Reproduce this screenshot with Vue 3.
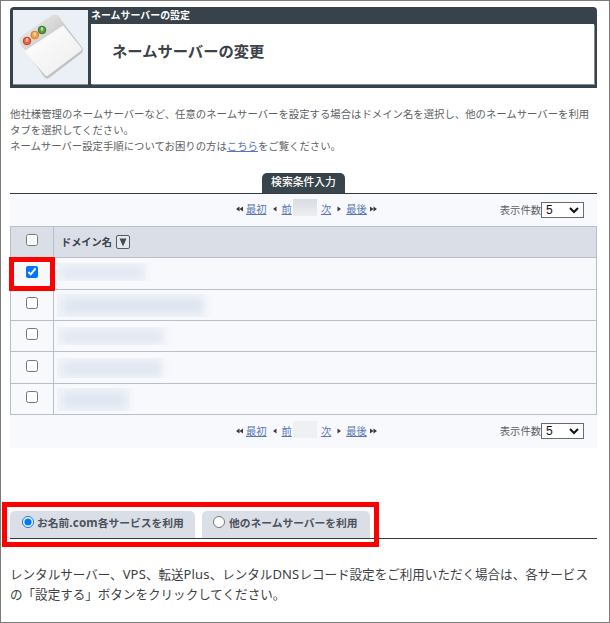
<script setup>
const rows = [
  { checked: true, w: 95, h: 18, top: 5 },
  { checked: false, w: 157, h: 23, top: 4 },
  { checked: false, w: 115, h: 18, top: 6 },
  { checked: false, w: 113, h: 20, top: 6 },
  { checked: false, w: 78, h: 23, top: 4 },
]
</script>

<template>
  <div class="page">
    <header class="head">
      <div class="thumb">
        <svg width="75" height="74" viewBox="0 0 75 74">
          <defs>
            <linearGradient id="side" x1="0" y1="0" x2="1" y2="1">
              <stop offset="0" stop-color="#dcdcdc" /><stop offset="1" stop-color="#b9b9bb" />
            </linearGradient>
            <linearGradient id="bar" x1="0" y1="0" x2="1" y2="1">
              <stop offset="0" stop-color="#f4f4f4" /><stop offset="1" stop-color="#bcbcbc" />
            </linearGradient>
            <linearGradient id="sheet" x1="0" y1="0" x2="1" y2="1">
              <stop offset="0" stop-color="#fff" /><stop offset="1" stop-color="#ededef" />
            </linearGradient>
          </defs>
          <path d="M7 32Q5 28 10 25L39 5.500Q43 3.500 46 7L69.500 38Q71 41 68 43.500L36 68Q33 70 30.500 66Z" fill="url(#side)" />
          <path d="M6 31Q5.500 27 10 25L39 5.500Q43 3.500 46 7L50 14L13 41L9 37Z" fill="url(#bar)" />
          <path d="M11.500 41L50 15.500L68.500 38Q69.500 40 67 41.500L35 65.500Q33 67 31 64Z" fill="url(#sheet)" />
          <g stroke-width="1">
            <circle cx="14" cy="31" r="3.800" fill="#e8643e" stroke="#cd3e24" />
            <circle cx="21.800" cy="25" r="3.800" fill="#f4a344" stroke="#df7922" />
            <circle cx="29" cy="20" r="3.800" fill="#579c3d" stroke="#30752a" />
          </g>
          <g fill="#fff" opacity=".6">
            <ellipse cx="14" cy="30" rx="1.300" ry="2" />
            <ellipse cx="21.800" cy="24" rx="1.300" ry="2" />
            <ellipse cx="29" cy="19" rx="1.300" ry="2" />
          </g>
        </svg>
      </div>
      <div class="headmain">
        <div class="crumb">ネームサーバーの設定</div>
        <h1 class="title">ネームサーバーの変更</h1>
      </div>
    </header>

    <p class="intro">
      他社様管理のネームサーバーなど、任意のネームサーバーを設定する場合はドメイン名を選択し、他のネームサーバーを利用<br />タブを選択してください。<br />ネームサーバー設定手順についてお困りの方は<a>こちら</a>をご覧ください。
    </p>

    <div class="condition"><span>検索条件入力</span></div>

    <section class="panel">
      <template v-for="pos in ['top', 'bottom']" :key="pos">
        <div class="pager" :class="pos">
          <div class="links">
            <svg class="dbl" width="7" height="6" viewBox="0 0 7 6"><path d="M3.5 .5V5.5L0 3ZM7 .5V5.5L3.5 3Z" /></svg>
            <a class="first">最初</a>
            <svg class="prev" width="4" height="6" viewBox="0 0 4 6"><path d="M3.5 .5V5.5L0 3Z" /></svg>
            <a>前</a>
            <span class="mask"></span>
            <a>次</a>
            <svg class="next" width="4" height="6" viewBox="0 0 4 6"><path d="M.5 .5V5.5L4 3Z" /></svg>
            <a class="last">最後</a>
            <svg class="dbl" width="7" height="6" viewBox="0 0 7 6"><path d="M0 .5V5.5L3.5 3ZM3.5 .5V5.5L7 3Z" /></svg>
          </div>
          <div class="count">
            <span class="label">表示件数</span>
            <div class="select">
              <span>5</span>
              <svg width="10" height="7" viewBox="0 0 10 7"><path d="M1 1L5 5L9 1" fill="none" stroke="#111" stroke-width="2" /></svg>
            </div>
          </div>
        </div>

        <div v-if="pos === 'top'" class="table">
          <div class="row th">
            <div class="pick"><input type="checkbox" /></div>
            <div class="name">
              ドメイン名
              <span class="sort"><svg width="8" height="9" viewBox="0 0 8 9"><path d="M0.5 .5H7.5L4 8.5Z" fill="#444b52" /></svg></span>
            </div>
          </div>
          <div v-for="(r, i) in rows" :key="i" class="row">
            <div class="pick">
              <input type="checkbox" :checked="r.checked" />
              <i v-if="r.checked" class="callout"></i>
            </div>
            <div class="cell">
              <span class="blurred" :style="{ width: r.w + 'px', height: r.h + 'px', marginTop: r.top + 'px' }"><i></i></span>
            </div>
          </div>
        </div>
      </template>
    </section>

    <div class="tabs">
      <label class="tab one"><input type="radio" name="ns" checked /><span>お名前<span class="com">.com</span>各サービスを利用</span></label>
      <label class="tab two"><input type="radio" name="ns" /><span>他のネームサーバーを利用</span></label>
      <i class="callout wide"></i>
    </div>

    <p class="note">
      レンタルサーバー、<span>VPS</span>、転送<span>Plus</span>、レンタル<span>DNS</span>レコード設定をご利用いただく場合は、各サービス<br />の「設定する」ボタンをクリックしてください。
    </p>
  </div>
</template>

<style>
body { margin: 0; background: #fff; }
</style>

<style scoped>
* { box-sizing: border-box; }
.page {
  width: 610px; height: 623px; padding: 6px 12px 0 9px; overflow: hidden;
  border: 1px solid #7d7a7a; background: #fff; color: #5c5f64;
  font-family: "Noto Sans CJK JP", sans-serif;
}
.head { display: flex; height: 81px; padding: 3px 3px 4px; background: #37424a; border-radius: 4px 4px 0 0; }
.thumb { width: 75px; height: 74px; background: #ebeff6; flex: none; box-shadow: 0 1px #819098; }
.thumb svg { display: block; }
.headmain { flex: 1; margin-left: 3px; }
.crumb { height: 14px; font-size: 9.95px; line-height: 9px; font-weight: 700; color: #fff; white-space: nowrap; }
.title {
  margin: 0; height: 60px; padding: 0 0 6px 21px; background: #fff; color: #3c4249;
  font-size: 15.3px; font-weight: 700; line-height: 53px; box-shadow: 1px 1px #819098;
}
.intro { margin: 18px 0 0; height: 48px; font-size: 10.39px; line-height: 16px; white-space: nowrap; }
a { color: #5876b4; text-decoration: underline; }
.condition { display: flex; justify-content: center; height: 40px; padding: 19px 0 0; border-bottom: 1px solid #343a42; }
.condition span {
  width: 83px; height: 20px; border-radius: 5px 5px 0 0; color: #fff; text-align: center;
  background: linear-gradient(#37424a, #39464d); font-size: 10.8px; font-weight: 500; line-height: 16px;
}
.panel { height: 254px; background: #f8f9fd; }
.pager { display: flex; justify-content: space-between; height: 32px; padding: 0 13px 0 226px; font-size: 10.3px; }
.links { display: flex; align-items: center; height: 30px; line-height: 16px; }
.links svg { fill: #343b3e; flex: none; }
.first { margin: 0 6px 0 3px; }
.prev { margin-right: 5px; }
.mask { width: 24px; height: 17px; margin: -3px 4px 0 1px; background: linear-gradient(#d8dbdf, #eceef2); }
.bottom .mask { background: #eff0f4; }
.next { margin: 0 5px 0 6px; }
.last { margin-right: 3px; }
.count { display: flex; align-items: center; height: 32px; }
.label { padding-bottom: 2px; }
.select {
  display: flex; align-items: center; justify-content: space-between; width: 43px; height: 16px;
  padding: 0 4px; border: 1px solid #6b6b6f; background: #fff; color: #111;
  font: 12px/14px "Liberation Sans", sans-serif;
}
.bottom .links { height: 31px; }
.table { border: 1px solid #b9bec9; height: 189px; }
.row { display: flex; height: 31px; border-bottom: 1px solid #b9bec9; }
.row:nth-child(2), .row:nth-child(5) { height: 32px; }
.row:last-child { border-bottom: 0; height: 30px; }
.th { background: #dadee6; }
.pick { position: relative; display: flex; justify-content: center; width: 43px; padding-top: 7px; border-right: 1px solid #b9bec9; flex: none; }
.row:nth-child(2) .pick, .row:nth-child(5) .pick { padding-top: 8px; }
.pick input { width: 12px; height: 12px; margin: 0; }
.name { display: flex; align-items: center; gap: 4px; padding: 0 0 2px 7px; font-size: 10.2px; font-weight: 700; color: #3c424b; }
.sort { display: flex; align-items: center; justify-content: center; width: 14px; height: 14px; border: 1px solid #555b64; border-radius: 2px; background: #e6e8ed; margin-top: 2px; }
.cell { padding-left: 3px; }
.blurred { display: block; overflow: hidden; background: #f2f5fa; padding: 4px 9px 3px 5px; -webkit-mask-image: linear-gradient(90deg, #000 92%, transparent); mask-image: linear-gradient(90deg, #000 92%, transparent); }
.blurred i { display: block; width: 100%; height: 100%; background: #dee5f0; filter: blur(5px); }
.callout { position: absolute; left: -2px; top: -1px; width: 46px; height: 34px; border: 5px solid #f00; z-index: 2; }
.tabs { position: relative; display: flex; gap: 7px; margin-top: 63px; height: 28px; border-bottom: 1px solid #343a42; }
.tab {
  display: flex; align-items: center; height: 27px; padding: 0 0 3px 12px; border-radius: 5px 5px 0 0;
  background: #dadee6; color: #4b525b; font-size: 10.75px; font-weight: 700; line-height: 20px; white-space: nowrap;
}
.tab input { width: 12px; height: 12px; margin: 0 3px 2px 0; flex: none; }
.one { width: 185px; }
.two { width: 168px; padding-left: 11px; }
.two input { margin-right: 4px; }
.com { font-family: "Noto Sans", sans-serif; font-size: 11.6px; letter-spacing: .2px; }
.wide { left: -8px; top: -9px; width: 377px; height: 45px; }
.note { margin: 25px 0 0; color: #3c4044; font-size: 12.55px; line-height: 20px; white-space: nowrap; }
.note span { font-family: "Noto Sans", sans-serif; font-size: 13px; letter-spacing: .15px; }
</style>
